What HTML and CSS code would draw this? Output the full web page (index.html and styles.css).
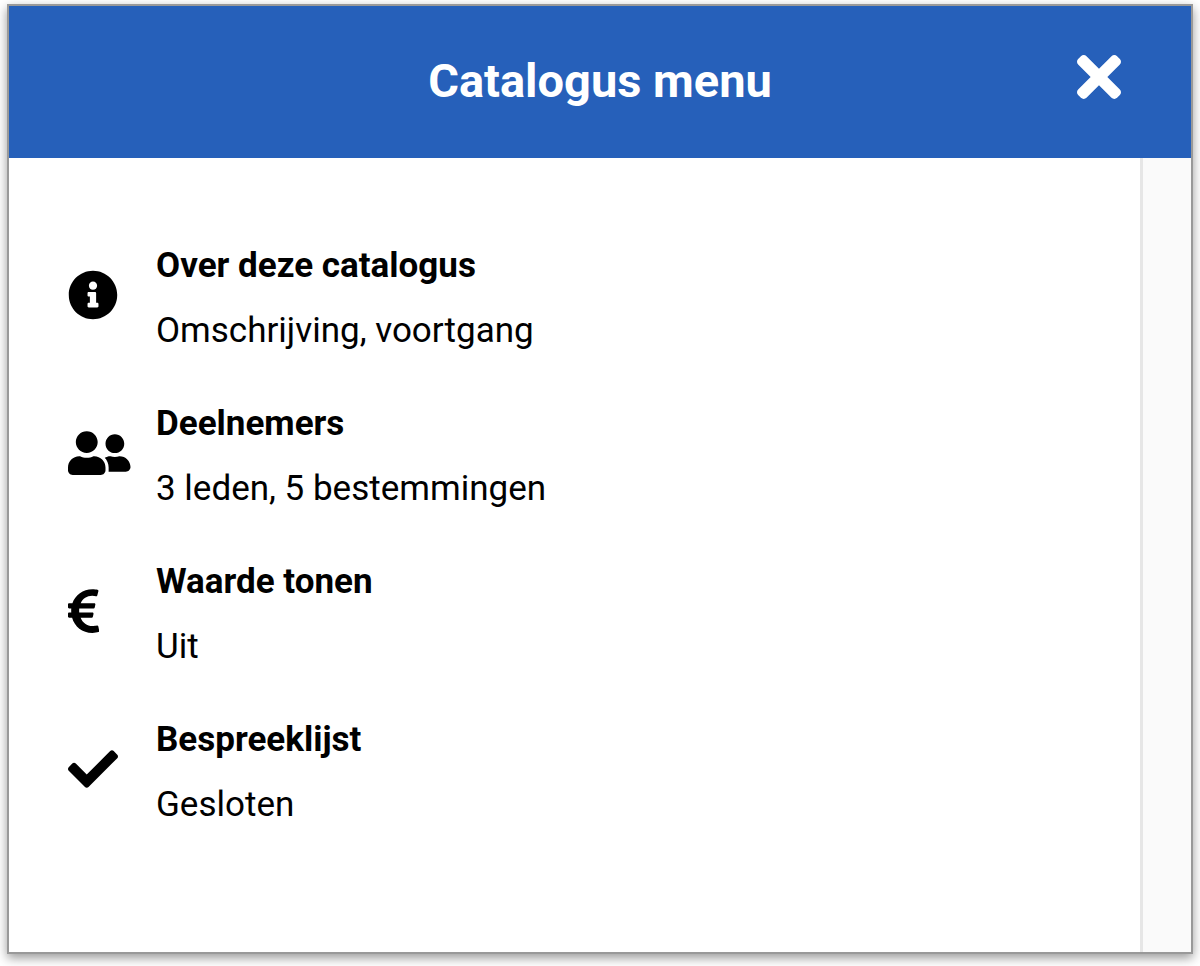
FILE: index.html
```
<!DOCTYPE html>
<html lang="nl">
<head>
    <meta charset="UTF-8">
    <meta name="viewport" content="width=device-width, initial-scale=1.0">
    <title>Catalogus menu</title>
    <link rel="stylesheet" href="styles.css">
</head>
<body>

<div class="window">
    <header class="header">
        <h1>Catalogus menu</h1>
        <button class="close" type="button" aria-label="Sluiten">
            <svg viewBox="0 0 352 512"><path d="M242.72 256l100.07-100.07c12.28-12.28 12.28-32.19 0-44.48l-22.24-22.24c-12.28-12.28-32.19-12.28-44.48 0L176 189.28 75.93 89.21c-12.28-12.28-32.19-12.28-44.48 0L9.21 111.45c-12.28 12.28-12.28 32.19 0 44.48L109.28 256 9.21 356.07c-12.28 12.28-12.28 32.19 0 44.48l22.24 22.24c12.28 12.28 32.2 12.28 44.48 0L176 322.72l100.07 100.07c12.28 12.28 32.2 12.28 44.48 0l22.24-22.24c12.28-12.28 12.28-32.19 0-44.48L242.72 256z"/></svg>
        </button>
    </header>

    <div class="content">
        <ul class="menu">
            <li>
                <a class="item" href="#over">
                    <svg class="icon" viewBox="0 0 512 512"><path d="M256 8C119.043 8 8 119.083 8 256c0 136.997 111.043 248 248 248s248-111.003 248-248C504 119.083 392.957 8 256 8zm0 110c23.196 0 42 18.804 42 42s-18.804 42-42 42-42-18.804-42-42 18.804-42 42-42zm56 254c0 6.627-5.373 12-12 12h-88c-6.627 0-12-5.373-12-12v-24c0-6.627 5.373-12 12-12h12v-64h-12c-6.627 0-12-5.373-12-12v-24c0-6.627 5.373-12 12-12h64c6.627 0 12 5.373 12 12v100h12c6.627 0 12 5.373 12 12v24z"/></svg>
                    <span class="text">
                        <strong>Over deze catalogus</strong>
                        <span>Omschrijving, voortgang</span>
                    </span>
                </a>
            </li>
            <li>
                <a class="item" href="#deelnemers">
                    <svg class="icon" viewBox="0 0 640 512"><path d="M192 256c61.9 0 112-50.1 112-112S253.9 32 192 32 80 82.1 80 144s50.1 112 112 112zm76.8 32h-8.3c-20.8 10-43.9 16-68.5 16s-47.6-6-68.5-16h-8.3C51.6 288 0 339.6 0 403.2V432c0 26.5 21.5 48 48 48h288c26.5 0 48-21.5 48-48v-28.8c0-63.6-51.6-115.2-115.2-115.2zM480 256c53 0 96-43 96-96s-43-96-96-96-96 43-96 96 43 96 96 96zm48 32h-3.8c-13.9 4.8-28.6 8-44.2 8s-30.3-3.2-44.2-8H432c-20.4 0-39.2 5.9-55.7 15.4 24.4 26.3 39.7 61.2 39.7 99.8v38.4c0 2.2-.5 4.3-.6 6.4H592c26.5 0 48-21.5 48-48 0-61.9-50.1-112-112-112z"/></svg>
                    <span class="text">
                        <strong>Deelnemers</strong>
                        <span>3 leden, 5 bestemmingen</span>
                    </span>
                </a>
            </li>
            <li>
                <a class="item" href="#waarde">
                    <svg class="icon" viewBox="0 0 320 512"><path d="M310.706 413.765c-1.314-6.63-7.835-10.872-14.424-9.369-10.692 2.439-27.422 5.413-45.426 5.413-56.763 0-101.929-34.79-121.461-85.449h113.689a12 12 0 0 0 11.708-9.369l6.373-28.36c1.686-7.502-4.019-14.631-11.708-14.631H115.22c-1.21-14.328-1.414-28.287.137-42.245H261.95a12 12 0 0 0 11.723-9.434l6.512-29.755c1.638-7.484-4.061-14.566-11.723-14.566H130.184c20.633-44.991 62.69-75.03 117.619-75.03 14.486 0 28.564 2.25 37.851 4.145 6.216 1.268 12.347-2.498 14.002-8.623l11.991-44.368c1.822-6.741-2.465-13.616-9.326-14.917C290.217 34.912 270.71 32 249.635 32 152.451 32 74.03 92.252 45.075 176H12c-6.627 0-12 5.373-12 12v29.755c0 6.627 5.373 12 12 12h21.569c-1.009 13.607-1.181 29.287-.181 42.245H12c-6.627 0-12 5.373-12 12v28.36c0 6.627 5.373 12 12 12h30.114C67.139 414.692 145.264 480 249.635 480c26.301 0 48.562-4.544 61.101-7.788 6.167-1.595 10.027-7.708 8.788-13.957l-8.818-44.49z"/></svg>
                    <span class="text">
                        <strong>Waarde tonen</strong>
                        <span>Uit</span>
                    </span>
                </a>
            </li>
            <li>
                <a class="item" href="#bespreeklijst">
                    <svg class="icon" viewBox="0 0 512 512"><path d="M173.898 439.404l-166.4-166.4c-9.997-9.997-9.997-26.206 0-36.204l36.203-36.204c9.997-9.998 26.207-9.998 36.204 0L192 312.69 432.095 72.596c9.997-9.997 26.207-9.997 36.204 0l36.203 36.204c9.997 9.997 9.997 26.206 0 36.204l-294.4 294.401c-9.998 9.997-26.207 9.997-36.204-.001z"/></svg>
                    <span class="text">
                        <strong>Bespreeklijst</strong>
                        <span>Gesloten</span>
                    </span>
                </a>
            </li>
        </ul>
        <div class="gutter"></div>
    </div>
</div>

</body>
</html>
```

FILE: styles.css
```
* {
    box-sizing: border-box;
}

body {
    font-family: Roboto, Arial, sans-serif;
    margin: 0;
    padding: 4px 7px 12px;
    min-height: 100vh;
    display: flex;
    background-color: white;
    color: black;
}

.window {
    flex: 1;
    display: flex;
    flex-direction: column;
    border: 2px solid #999999;
    box-shadow: 0 4px 10px rgba(0, 0, 0, 0.4);
}

.header {
    display: grid;
    grid-template-columns: 1fr auto 1fr;
    align-items: center;
    padding: 39px 70px 49px;
    background-color: #2660ba;
    color: white;
}

.header h1 {
    grid-column: 2;
    margin: 0;
    padding-top: 8px;
    font-size: 47px;
    line-height: 56px;
    font-weight: 700;
}

.close {
    justify-self: end;
    padding: 0;
    border: none;
    background: none;
    color: white;
    cursor: pointer;
}

.close svg {
    display: block;
    width: 44px;
    height: 64px;
    fill: currentColor;
}

.content {
    flex: 1;
    display: flex;
}

.menu {
    flex: 1;
    display: flex;
    flex-direction: column;
    gap: 28px;
    margin: 0;
    padding: 75px 59px;
    list-style: none;
}

.item {
    display: grid;
    grid-template-columns: 64px 1fr;
    column-gap: 24px;
    align-items: center;
    color: black;
    text-decoration: none;
}

.icon {
    height: 50px;
    margin-bottom: 6px;
    fill: currentColor;
}

.text {
    display: flex;
    flex-direction: column;
    font-size: 35px;
    line-height: 65px;
}

/* Lege strook rechts */
.gutter {
    width: 51px;
    border-left: 3px solid #e6e6e6;
    background-color: #fafafa;
}
```
